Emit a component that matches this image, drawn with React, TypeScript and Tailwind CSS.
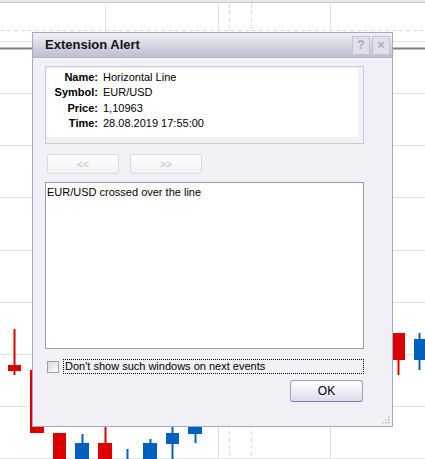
import React from "react";

const font = { fontFamily: '"Liberation Sans", Arial, sans-serif' };

// chart candles hidden partly behind the alert window
const candles = [
  { x: 8, y: 365, w: 13, h: 6, wick: [329, 375], color: "#dd0000" },
  { x: 30, y: 370, w: 14, h: 63, wick: [370, 433], color: "#dd0000" },
  { x: 53, y: 433, w: 13, h: 30, wick: [433, 459], color: "#dd0000" },
  { x: 75, y: 443, w: 14, h: 20, wick: [434, 459], color: "#0060c0" },
  { x: 98, y: 443, w: 14, h: 20, wick: [420, 459], color: "#dd0000" },
  { x: 126, y: 470, w: 2, h: 0, wick: [449, 459], color: "#0060c0" },
  { x: 143, y: 443, w: 14, h: 20, wick: [439, 459], color: "#0060c0" },
  { x: 166, y: 433, w: 13, h: 11, wick: [420, 459], color: "#0060c0" },
  { x: 188, y: 420, w: 14, h: 14, wick: [420, 443], color: "#0060c0" },
  { x: 392, y: 333, w: 13, h: 27, wick: [333, 375], color: "#dd0000" },
  { x: 414, y: 339, w: 11, h: 21, wick: [333, 370], color: "#0060c0" },
];

function Chart() {
  const rows = [41, 93, 145, 197, 250, 302, 354, 406, 458];
  return (
    <svg width="425" height="459" className="absolute left-0 top-0">
      <rect x="0" y="0" width="425" height="2" fill="#e8e8e8" />
      <line x1="0" y1="2.5" x2="425" y2="2.5" stroke="#c9c9c9" />
      {rows.map((y) => (
        <line key={y} x1="0" y1={y + 0.5} x2="425" y2={y + 0.5} stroke="#e2e2e2" />
      ))}
      <line x1="0" y1="30.5" x2="425" y2="30.5" stroke="#dcdcdc" strokeDasharray="4 3" />
      {[105, 218, 330].map((x) => (
        <line key={x} x1={x + 0.5} y1="4" x2={x + 0.5} y2="459" stroke="#e2e2e2" />
      ))}
      {[229, 251].map((x) => (
        <line key={x} x1={x + 0.5} y1="4" x2={x + 0.5} y2="459" stroke="#dcdcdc" strokeDasharray="4 3" />
      ))}
      <line x1="0" y1="48.5" x2="425" y2="48.5" stroke="#7f7f7f" strokeWidth="2" />
      {candles.map((c, i) => (
        <g key={i}>
          <line
            x1={c.x + Math.floor(c.w / 2) + 0.5}
            y1={c.wick[0]}
            x2={c.x + Math.floor(c.w / 2) + 0.5}
            y2={c.wick[1]}
            stroke={c.color}
            strokeWidth="2"
          />
          <rect x={c.x} y={c.y} width={c.w} height={c.h} fill={c.color} />
        </g>
      ))}
    </svg>
  );
}

function InfoRow({ label, value }: { label: string; value: string }) {
  return (
    <div className="flex h-[15.5px] items-center">
      <div className="w-[53px] pr-[2px] text-right font-bold text-black">{label}</div>
      <div className="flex-1 pl-[3px] text-black">{value}</div>
    </div>
  );
}

function NavButton({ children }: { children: React.ReactNode }) {
  return (
    <div className="flex h-[20px] w-[72px] items-center justify-center rounded-[2px] border border-[#d9d9de] bg-gradient-to-b from-[#ffffff] to-[#f1f1f4] text-[10px] text-[#bdbdc4]">
      {children}
    </div>
  );
}

function AlertWindow() {
  return (
    <div
      className="absolute left-[32px] top-[32px] flex h-[395px] w-[361px] flex-col border border-[#a6a8be] bg-[#f1f0f7] text-[11px]"
      style={font}
    >
      <div className="flex h-[25px] items-center justify-between border-b border-[#b3b5c9] bg-gradient-to-b from-[#f0f0f6] to-[#bcbfd2] pl-3 pr-[2px]">
        <span className="text-[13px] font-bold text-[#141414]">Extension Alert</span>
        <div className="flex gap-[2px]">
          <div className="flex h-[19px] w-[18px] items-center justify-center border border-[#c3c4d4] bg-[#dfe0ea] text-[12px] font-bold text-[#a9abbd]">
            ?
          </div>
          <div className="flex h-[19px] w-[18px] items-center justify-center border border-[#c3c4d4] bg-[#dfe0ea] text-[13px] font-bold text-[#a9abbd]">
            ×
          </div>
        </div>
      </div>

      <div className="flex flex-1 flex-col pl-3 pr-[28px] pt-[8px]">
        <div className="h-[78px] border border-[#c9c9d4] pb-[6px] pl-[1px] pr-[5px] pt-[1px]">
          <div className="h-full bg-white pt-[1px]">
            <InfoRow label="Name:" value="Horizontal Line" />
            <InfoRow label="Symbol:" value="EUR/USD" />
            <InfoRow label="Price:" value="1,10963" />
            <InfoRow label="Time:" value="28.08.2019 17:55:00" />
          </div>
        </div>

        <div className="mt-[10px] flex gap-[11px] pl-[2px]">
          <NavButton>&lt;&lt;</NavButton>
          <NavButton>&gt;&gt;</NavButton>
        </div>

        <div className="mt-[8px] h-[167px] border border-[#9d9da4] bg-white px-[1px] pt-[1px] text-black">
          EUR/USD crossed over the line
        </div>

        <div className="mt-[10px] flex h-[15px] items-center gap-[4px] pl-[2px]">
          <div className="h-[12px] w-[12px] border border-[#9a9bb0] bg-gradient-to-br from-[#d8d8e0] to-[#ffffff]" />
          <div className="flex h-[15px] flex-1 items-center border border-dotted border-black pl-[1px] text-black">
            Don't show such windows on next events
          </div>
        </div>

        <div className="mt-[6px] flex justify-end">
          <div className="mr-[1px] flex h-[22px] w-[73px] items-center justify-center rounded-[3px] border border-[#9e9fcf] border-b-[#7b7cb9] bg-gradient-to-b from-[#ffffff] to-[#dddced] text-[12px] text-black">
            OK
          </div>
        </div>
      </div>

      <svg width="8" height="8" className="absolute bottom-[2px] right-[2px]">
        {[
          [6, 0],
          [3, 3],
          [6, 3],
          [0, 6],
          [3, 6],
          [6, 6],
        ].map(([x, y], i) => (
          <rect key={i} x={x} y={y} width="1.5" height="1.5" fill="#b8bacb" />
        ))}
      </svg>
    </div>
  );
}

export default function App() {
  return (
    <div className="relative h-[459px] w-[425px] overflow-hidden bg-white">
      <Chart />
      <AlertWindow />
    </div>
  );
}
